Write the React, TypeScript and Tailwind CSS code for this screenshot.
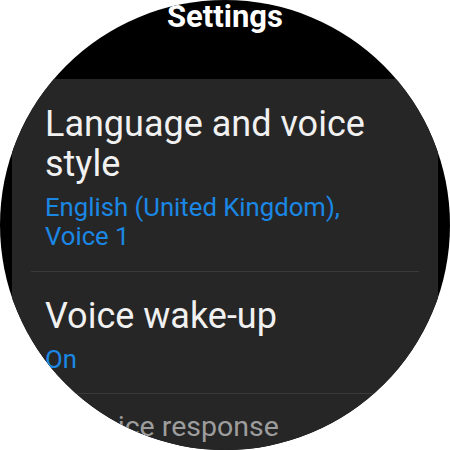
import React from "react";

type Item = {
  title: string[];
  subtitle?: string[];
};

const items: Item[] = [
  {
    title: ["Language and voice", "style"],
    subtitle: ["English (United Kingdom),", "Voice 1"],
  },
  { title: ["Voice wake-up"], subtitle: ["On"] },
];

function SettingRow({ item }: { item: Item }) {
  return (
    <div className="flex flex-col px-[33px]">
      <div className="flex flex-col text-[36px] leading-[40px] text-[#f1f1f1]">
        {item.title.map((line) => (
          <span key={line}>{line}</span>
        ))}
      </div>
      {item.subtitle && (
        <div className="mt-[9px] flex flex-col text-[25.7px] leading-[29px] text-[#1b87e4]">
          {item.subtitle.map((line) => (
            <span key={line}>{line}</span>
          ))}
        </div>
      )}
    </div>
  );
}

export default function App() {
  return (
    <div
      className="w-[450px] h-[450px] bg-white overflow-hidden"
      style={{ fontFamily: "Roboto, 'Noto Sans', sans-serif" }}
    >
      <div className="w-[450px] h-[450px] rounded-full bg-black overflow-hidden flex flex-col">
        <div className="h-[79px] shrink-0 pt-[2px] text-center text-[31px] leading-[30px] font-bold text-white">
          Settings
        </div>
        <div className="mx-[12px] flex-1 bg-[#262626] flex flex-col pt-[25px]">
          <SettingRow item={items[0]} />
          <div className="mx-[19px] mt-[20px] h-px bg-[#3a3a3a]" />
          <div className="pt-[24px]">
            <SettingRow item={items[1]} />
          </div>
          <div className="mx-[19px] mt-[19px] h-px bg-[#3a3a3a]" />
          <div className="pt-[16px] pl-[72px]">
            <span className="block text-[28.5px] leading-[34px] text-[#9d9d9d] whitespace-nowrap">
              Voice response
            </span>
          </div>
        </div>
      </div>
    </div>
  );
}
